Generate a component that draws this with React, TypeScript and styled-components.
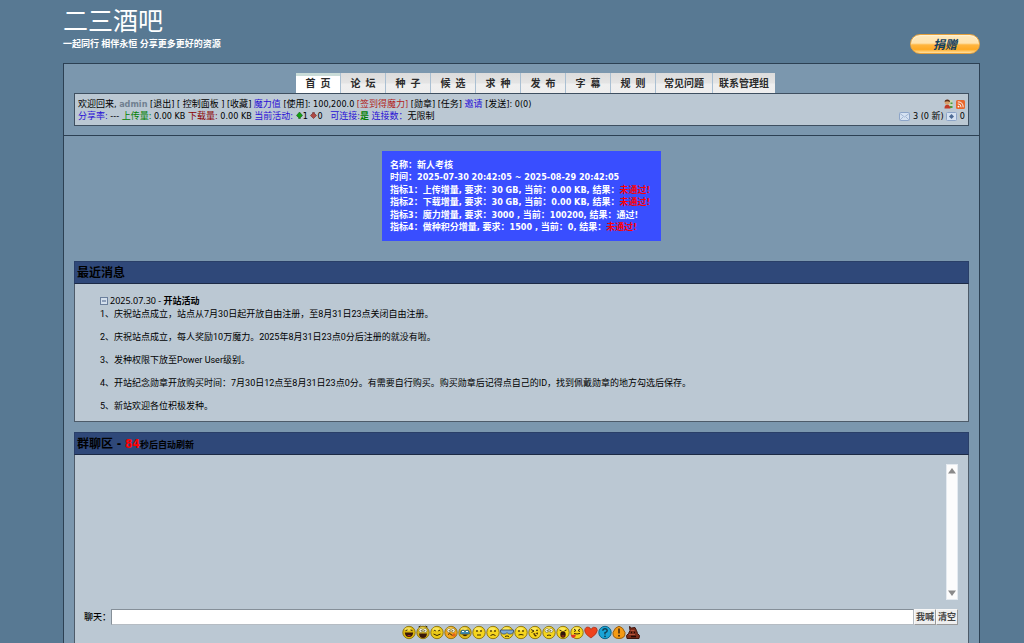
import React, { useState } from "react";
import styled, { createGlobalStyle } from "styled-components";

const latin = `"DejaVu Sans Condensed", "Noto Sans CJK SC", sans-serif`;
const plain = `"Noto Sans", "Noto Sans CJK SC", sans-serif`;
const prose = `Roboto, "Noto Sans CJK SC", sans-serif`;

const GlobalStyle = createGlobalStyle`
  *, *::before, *::after { box-sizing: border-box; }
  body {
    margin: 0;
    background: #587993;
    color: #000;
    font: 9px/12px ${plain};
  }
  b, strong { font-family: ${latin}; font-weight: 700; }
  a { color: inherit; text-decoration: none; }
  button, input { font: inherit; border-radius: 0; margin: 0; }
`;

const Page = styled.div`
  display: flex;
  flex-direction: column;
  min-height: 100vh;
  padding: 0 44px 0 63px;
`;

const Masthead = styled.header`
  display: flex;
  justify-content: space-between;
  align-items: flex-end;
  height: 63px;
  padding-bottom: 9px;
  color: #fff;
`;

const SiteName = styled.h1`
  margin: 0 0 2px;
  font-size: 25px;
  line-height: 32px;
  font-weight: 400;
`;

const Slogan = styled.p`
  margin: 0 0 4px;
  font-weight: 700;
`;

const Donate = styled.a`
  width: 70px;
  height: 20px;
  border: 1px solid #e7a23c;
  border-radius: 10px;
  background: linear-gradient(#ffe9bd 0, #ffe3ae 45%, #ffb640 55%, #ffaa24 80%, #ffe2a5 100%);
  box-shadow: inset 0 1px 1px #fff3d6;
  color: #123e5e;
  font-size: 12px;
  line-height: 19px;
  font-weight: 700;
  font-style: italic;
  text-align: center;
`;

const Frame = styled.div`
  flex: 1;
  display: flex;
  flex-direction: column;
  border: 1px solid #2c4053;
  border-bottom: 0;
  background: #7b97ae;
`;

const TopArea = styled.div`
  padding: 9px 10px;
  border-bottom: 1px solid #2c4053;
`;

const Nav = styled.nav`
  display: flex;
  justify-content: center;
  padding-left: 28px;
`;

const Tab = styled.a<{ $active?: boolean; $pad: number }>`
  min-width: 45px;
  height: 20px;
  padding: 0 ${(p) => p.$pad}px;
  border-right: 1px solid #a9bfd2;
  background: ${(p) =>
    p.$active
      ? "linear-gradient(#c9dcd8 0, #c9dcd8 3px, #fff 3px)"
      : "linear-gradient(#dcdcdc, #e4e4e4 50%, #efefef 55%, #eeeeee)"};
  color: #2b2b2b;
  font-size: 10px;
  line-height: 21px;
  font-weight: 700;
  text-align: center;
  white-space: pre;
  &:last-child { border-right: 0; }
`;

const UserBar = styled.div`
  display: flex;
  justify-content: space-between;
  padding: 4px 3px 3px;
  border: 1px solid #3e4f60;
  background: #bbc8d3;
  font-family: ${latin};
  line-height: 12px;
  white-space: pre;
`;

const Status = styled.div`
  text-align: right;
  svg { vertical-align: -2px; }
`;

const Ink = styled.span<{ $c: string }>`
  color: ${(p) => p.$c};
`;

const Content = styled.main`
  flex: 1;
  display: flex;
  flex-direction: column;
  padding: 15px 10px 0;
`;

const Exam = styled.section`
  display: flex;
  flex-direction: column;
  justify-content: space-between;
  align-self: center;
  min-width: 279px;
  min-height: 90px;
  margin-bottom: 20px;
  padding: 8px;
  background: #394eff;
  color: #fff;
  font-family: ${latin};
  font-weight: 700;
  white-space: pre;
`;

const PanelTitle = styled.h2`
  margin: 0;
  height: 23px;
  padding: 0 2px;
  border: 1px solid #2a3f68;
  border-bottom-color: #1c2a45;
  background: #2f4879;
  font-family: ${latin};
  font-size: 12px;
  line-height: 22px;
  font-weight: 700;
  small { font-size: 9px; }
`;

const NewsBody = styled.div`
  margin-bottom: 10px;
  padding: 11px 25px 9px;
  border: 1px solid #4d5b69;
  border-top: 0;
  background: #bbc8d3;
  font-family: ${prose};
`;

const NewsHead = styled.div`
  display: flex;
  gap: 2px;
  align-items: center;
  margin-bottom: 1px;
  font-family: ${plain};
`;

const Item = styled.p`
  margin: 0 0 11px;
  &:last-child { margin-bottom: 0; }
`;

const ChatBody = styled.div`
  flex: 1;
  padding: 9px 10px 0 9px;
  border: 1px solid #4d5b69;
  border-top: 0;
  border-bottom: 0;
  background: #bbc8d3;
`;

const Messages = styled.div`
  display: flex;
  justify-content: flex-end;
  height: 136px;
`;

const Scroller = styled.div`
  display: flex;
  flex-direction: column;
  justify-content: space-between;
  width: 12px;
  background: #fcfcfc;
  border: 1px solid #e4eaf0;
`;

const Arrow = styled.button`
  display: flex;
  justify-content: center;
  align-items: center;
  width: 10px;
  height: 12px;
  padding: 0;
  border: 0;
  background: none;
`;

const ChatForm = styled.form`
  display: flex;
  align-items: center;
  margin-top: 9px;
`;

const ChatLabel = styled.label`
  width: 27px;
  font-weight: 500;
`;

const ChatInput = styled.input`
  flex: 1;
  min-width: 0;
  height: 16px;
  padding: 0 2px;
  border: 1px solid #8b959e;
  border-color: #858f98 #b5bcc3 #b5bcc3 #858f98;
  background: #fff;
`;

const ChatButton = styled.button`
  width: 22px;
  height: 16px;
  padding: 0;
  border: 1px solid #f8f8f8;
  border-right-color: #999;
  border-bottom-color: #999;
  background: #efefef;
  color: #444;
  font-weight: 700;
  line-height: 12px;
`;

const Smileys = styled.div`
  display: flex;
  justify-content: center;
`;

const SmileyButton = styled.button`
  width: 14px;
  height: 15px;
  padding: 0;
  border: 0;
  background: none;
  svg { display: block; }
`;

const ink = { stroke: "#3b2a05", fill: "none", strokeWidth: 1 } as const;
const Eyes = () => (
  <g fill="#3b2a05">
    <ellipse cx="5" cy="5.5" rx=".8" ry="1.1" />
    <ellipse cx="9" cy="5.5" rx=".8" ry="1.1" />
  </g>
);
const Goggle = () => (
  <g fill="#fff" stroke="#77702a" strokeWidth=".6">
    <circle cx="5" cy="5" r="2" />
    <circle cx="9" cy="5" r="2" />
    <circle cx="5.3" cy="5.2" r=".5" fill="#222" />
    <circle cx="8.7" cy="5.2" r=".5" fill="#222" />
  </g>
);

const faces: { name: string; tone?: string; art: React.ReactNode }[] = [
  { name: "大笑", tone: "#dfb90e", art: <><path d="M3.5 5.2l2-.8M8.5 4.4l2 .8" {...ink} /><path d="M2.8 7h8.4q-.4 4.5-4.2 4.5T2.8 7z" fill="#38180a" /><path d="M5 10q2-1 4 0-2 1.5-4 0z" fill="#c8321b" /></> },
  { name: "狂喜", tone: "#d6b31c", art: <><Goggle /><path d="M2.5 1.5l2-1M9.5.5l2 1" {...ink} /><path d="M3 8h8q-.4 4.5-4 4.5T3 8z" fill="#38180a" /></> },
  { name: "微笑", tone: "#ecca18", art: <><path d="M3.8 5.5q1-1.5 2 0M8.2 5.5q1-1.5 2 0M3.5 8.5q3.500 3 7 0" {...ink} /></> },
  { name: "害羞", tone: "#f4a51d", art: <><Goggle /><path d="M4 9q2-2 3 0t4 0" {...ink} /><circle cx="10" cy="9.5" r="1.8" fill="#e2641c" /></> },
  { name: "哭泣", tone: "#dcb91a", art: <><path d="M3 5.5q2-2 4 0 2-2 4 0l.5 3h-9z" fill="#3f91b8" stroke="#274a58" strokeWidth=".6" /><path d="M4 9h6q-3 3.5-6 0z" fill="#392008" /><path d="M4 6h2M8 6h2" stroke="#fff" /></> },
  { name: "平静", art: <><Eyes /><path d="M5 9.5h4" {...ink} /></> },
  { name: "难过", art: <><Eyes /><path d="M4.5 10q2.5-2 5 0" {...ink} /></> },
  { name: "墨镜", art: <><path d="M.5 4.5h13v2l-2 2H8.5L7 7 5.5 8.5h-3l-2-2z" fill="#7ba8d6" stroke="#344a68" strokeWidth=".8" /><path d="M5 11q2-1.2 4 0" {...ink} /></> },
  { name: "失望", art: <><Eyes /><path d="M4.5 9.5q2.5-1 5 0" {...ink} /></> },
  { name: "眨眼", art: <><path d="M3 4l3 1.5L3.5 7M8 5q1-1 2 0" {...ink} /><path d="M5 8l5-1q0 4-3 4z" fill="#47290a" /><path d="M7 8l4 3" stroke="#f3d32c" strokeWidth="1.5" /></> },
  { name: "翻眼", art: <><Goggle /><path d="M5 10q2-1 4 0" {...ink} /></> },
  { name: "惊叫", art: <><path d="M3.5 4.5l2 .8M8.5 5.3l2-.8" {...ink} /><ellipse cx="7" cy="9" rx="2.7" ry="3.2" fill="#32170a" /><path d="M5.5 10.5h3" stroke="#c5331d" /></> },
  { name: "吐舌", art: <><path d="M4 3.5l2 1.5-2 1M10 3.5L8 5l2 1M4 8q3 1 6 0" {...ink} /><path d="M.8 9.500l5-.5q0 4-4 3z" fill="#e33825" /></> },
];

const Face = ({ tone = "#f5d51e", children }: { tone?: string; children: React.ReactNode }) => (
  <svg width="14" height="15" viewBox="0 0 14 14" aria-hidden="true">
    <circle cx="7" cy="7" r="6.2" fill={tone} stroke="#8b7008" strokeWidth=".9" />
    <ellipse cx="6" cy="3.5" rx="3.5" ry="1.8" fill="#fff38a" opacity=".6" />
    {children}
  </svg>
);

const extras: { name: string; art: React.ReactNode }[] = [
  { name: "爱心", art: <path d="M7 12.5Q.5 8.5.7 4.5 1.5.8 4.8 1.8 6.4 2.3 7 4q.8-2 2.8-2.3Q13.3 1.500 13.3 5 13 8.5 7 12.5z" fill="#ee431c" stroke="#a82b12" strokeWidth=".7" /> },
  { name: "疑问", art: <><circle cx="7" cy="7" r="6.2" fill="#1ba4d6" stroke="#0e6589" /><path d="M4.8 5.3Q5 3.2 7 3.2t2.2 2Q9.2 6.5 7 7.2V9" fill="none" stroke="#123c50" strokeWidth="1.4" /><circle cx="7" cy="10.8" r=".9" fill="#123c50" /></> },
  { name: "注意", art: <><path d="M7 .7Q11 1.5 13 7q.5 6-6 6T1 7Q3 1.5 7 .7z" fill="#f49a13" stroke="#9b5c07" /><path d="M7 3v5" stroke="#44290a" strokeWidth="1.6" /><circle cx="7" cy="10.3" r="1" fill="#44290a" /></> },
  { name: "便便", art: <><path d="M3.5 1l2 1.5L9 2l1.5 3 1 3 2 2-.5 3H1l-.5-3 2-2L4 5z" fill="#7b2d1a" stroke="#3f170d" /><path d="M4.5 5h4M3 9h6" stroke="#b6543a" /><path d="M5 7h1M8 7h1M5 11h5" stroke="#210b06" strokeWidth="1.5" /></> },
];

const UpMark = () => (
  <svg width="7" height="7" viewBox="0 0 7 8" aria-label="上传">
    <path d="M3.5 0L7 4 5 6H4.500v1.500h-2V6H2L0 4z" fill="#12a012" stroke="#134b13" strokeWidth=".6" />
  </svg>
);
const DownMark = () => (
  <svg width="7" height="7" viewBox="0 0 7 8" aria-label="下载">
    <path d="M2.500.5h2V2H5l2 2-3.500 3.500L0 4l2-2h.5z" fill="#b04a44" stroke="#5c1c1c" strokeWidth=".6" />
  </svg>
);
const Mail = ({ buddy }: { buddy?: boolean }) => (
  <svg width="11" height="9" viewBox="0 0 11 9" aria-hidden="true">
    <rect x=".5" y=".5" width="10" height="8" rx="1" fill="#d5e2f2" stroke="#8da5c8" />
    {buddy ? (
      <path d="M5.5 2L8 4.5 5.5 7 3 4.5z" fill="#4d6a94" />
    ) : (
      <path d="M1 1.5l4.5 3.5L10 1.5M1 8l3-3M10 8L7 5" fill="none" stroke="#94aac9" strokeWidth=".8" />
    )}
  </svg>
);
const Friends = () => (
  <svg width="9" height="10" viewBox="0 0 9 10" aria-label="好友">
    <path d="M5 1h3.5v8H5z" fill="#c9d8b4" />
    <path d="M6.5 3.5h2V5h-2zM6 7h2.5v2H6z" fill="#4b9b3c" />
    <circle cx="3.2" cy="3.3" r="2.5" fill="#d9a06a" />
    <path d="M.7 3Q.5.5 3.3.5T6 3Q3 1.5.7 3z" fill="#5b2b16" />
    <path d="M.5 9Q.7 5.8 3.3 5.8T6.5 9.5H.5z" fill="#c33a26" />
  </svg>
);
const Rss = () => (
  <svg width="9" height="9" viewBox="0 0 9 9" aria-label="RSS">
    <rect width="9" height="9" rx="1.5" fill="#e8672c" />
    <circle cx="2.5" cy="6.6" r=".9" fill="#fff" />
    <path d="M1.8 3.8q3.3 0 3.3 3.5M1.8 1.8q5.4 0 5.4 5.5" fill="none" stroke="#fff" strokeWidth=".9" />
  </svg>
);
const Collapse = () => (
  <svg width="8" height="8" viewBox="0 0 8 8" aria-hidden="true">
    <rect x=".5" y=".5" width="7" height="7" fill="#d3dfec" stroke="#6b7f9c" />
    <path d="M2 4h4" stroke="#4a6188" />
  </svg>
);

const tabs = [
  { label: "首  页", pad: 0 },
  { label: "论  坛", pad: 0 },
  { label: "种  子", pad: 0 },
  { label: "候  选", pad: 0 },
  { label: "求  种", pad: 0 },
  { label: "发  布", pad: 0 },
  { label: "字  幕", pad: 0 },
  { label: "规  则", pad: 0 },
  { label: "常见问题", pad: 8 },
  { label: "联系管理组", pad: 6 },
];

const news = [
  "1、庆祝站点成立，站点从7月30日起开放自由注册，至8月31日23点关闭自由注册。",
  "2、庆祝站点成立，每人奖励10万魔力。2025年8月31日23点0分后注册的就没有啦。",
  "3、发种权限下放至Power User级别。",
  "4、开站纪念勋章开放购买时间：7月30日12点至8月31日23点0分。有需要自行购买。购买勋章后记得点自己的ID，找到佩戴勋章的地方勾选后保存。",
  "5、新站欢迎各位积极发种。",
];

const BLUE = "#2a10d6";

export default function App() {
  const [text, setText] = useState("");
  return (
    <>
      <GlobalStyle />
      <Page>
        <Masthead>
          <div>
            <SiteName>二三酒吧</SiteName>
            <Slogan>一起同行 相伴永恒 分享更多更好的资源</Slogan>
          </div>
          <Donate href="#donate">捐赠</Donate>
        </Masthead>

        <Frame>
          <TopArea>
            <Nav>
              {tabs.map((t, i) => (
                <Tab key={t.label} href="#nav" $active={i === 0} $pad={t.pad}>{t.label}</Tab>
              ))}
            </Nav>
            <UserBar>
              <div>
                <div>
                  欢迎回来, <a href="#me"><b><Ink $c="#708090">admin</Ink></b></a> [<a href="#out">退出</a>] [ <a href="#cp">控制面板</a> ] [<a href="#fav">收藏</a>] <Ink $c={BLUE}>魔力值</Ink> [<a href="#use">使用</a>]: 100,200.0 <a href="#sign"><Ink $c="#b22222">[签到得魔力]</Ink></a> [<a href="#medal">勋章</a>] [<a href="#task">任务</a>] <Ink $c={BLUE}>邀请</Ink> [<a href="#send">发送</a>]: 0(0)
                </div>
                <div>
                  <Ink $c={BLUE}>分享率:</Ink> --- <Ink $c="#008000">上传量:</Ink> 0.00 KB <Ink $c="#8b0000">下载量:</Ink> 0.00 KB <Ink $c={BLUE}>当前活动:</Ink> <UpMark />1 <DownMark />0   <Ink $c={BLUE}>可连接:</Ink><b><Ink $c="#008000">是</Ink></b> <Ink $c={BLUE}>连接数：</Ink>无限制
                </div>
              </div>
              <Status>
                <div><a href="#friends"><Friends /></a> <a href="#rss"><Rss /></a></div>
                <div><Mail /> 3 (0 新) <Mail buddy /> 0</div>
              </Status>
            </UserBar>
          </TopArea>

          <Content>
            <Exam>
              <div>名称：新人考核</div>
              <div>时间：2025-07-30 20:42:05 ~ 2025-08-29 20:42:05</div>
              <div>指标1：上传增量, 要求：30 GB, 当前：0.00 KB, 结果：<Ink $c="#f00">未通过!</Ink></div>
              <div>指标2：下载增量, 要求：30 GB, 当前：0.00 KB, 结果：<Ink $c="#f00">未通过!</Ink></div>
              <div>指标3：魔力增量, 要求：3000 , 当前：100200, 结果：通过!</div>
              <div>指标4：做种积分增量, 要求：1500 , 当前：0, 结果：<Ink $c="#f00">未通过!</Ink></div>
            </Exam>

            <PanelTitle>最近消息</PanelTitle>
            <NewsBody>
              <NewsHead>
                <Collapse />
                <span>2025.07.30 - <b>开站活动</b></span>
              </NewsHead>
              {news.map((n) => <Item key={n}>{n}</Item>)}
            </NewsBody>

            <PanelTitle>群聊区 - <Ink $c="#f00">84</Ink><small>秒后自动刷新</small></PanelTitle>
            <ChatBody>
              <Messages>
                <Scroller>
                  <Arrow type="button" aria-label="向上滚动">
                    <svg width="8" height="6" viewBox="0 0 8 6"><path d="M4 0l4 5.5H0z" fill="#8a8a8a" /></svg>
                  </Arrow>
                  <Arrow type="button" aria-label="向下滚动">
                    <svg width="8" height="6" viewBox="0 0 8 6"><path d="M4 6L0 .5h8z" fill="#8a8a8a" /></svg>
                  </Arrow>
                </Scroller>
              </Messages>
              <ChatForm onSubmit={(e) => e.preventDefault()}>
                <ChatLabel htmlFor="shout">聊天：</ChatLabel>
                <ChatInput id="shout" value={text} onChange={(e) => setText(e.target.value)} />
                <ChatButton type="submit">我喊</ChatButton>
                <ChatButton type="button" onClick={() => setText("")}>清空</ChatButton>
              </ChatForm>
              <Smileys>
                {faces.map((f) => (
                  <SmileyButton key={f.name} type="button" aria-label={f.name}>
                    <Face tone={f.tone}>{f.art}</Face>
                  </SmileyButton>
                ))}
                {extras.map((x) => (
                  <SmileyButton key={x.name} type="button" aria-label={x.name}>
                    <svg width="14" height="15" viewBox="0 0 14 14" aria-hidden="true">{x.art}</svg>
                  </SmileyButton>
                ))}
              </Smileys>
            </ChatBody>
          </Content>
        </Frame>
      </Page>
    </>
  );
}
